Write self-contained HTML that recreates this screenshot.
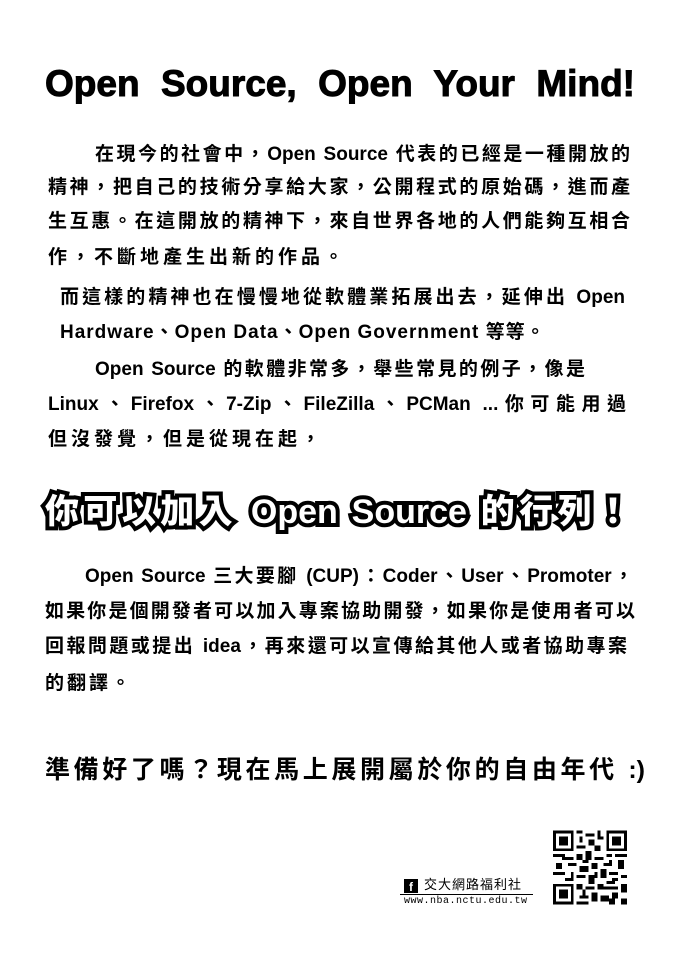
<!DOCTYPE html>
<html><head><meta charset="utf-8"><style>
body{margin:0;width:678px;height:960px;background:#fff;position:relative;overflow:hidden;font-family:"Liberation Sans","Noto Sans CJK TC",sans-serif;color:#000}
.l{position:absolute;font-size:19px;font-weight:bold;white-space:nowrap;line-height:24px}
.j{text-align:justify;text-align-last:justify}
.t{position:absolute;left:45px;width:590px;top:62px;text-align:justify;text-align-last:justify;font-size:37px;font-weight:900;font-family:"Liberation Sans",sans-serif;line-height:44px;-webkit-text-stroke:1px #000;white-space:nowrap}
.h{position:absolute;left:45px;width:585px;top:490px;font-size:34px;font-weight:900;line-height:44px;color:#fff;-webkit-text-stroke:8px #000;paint-order:stroke fill;text-align:justify;text-align-last:justify;white-space:nowrap}
</style></head><body>
<div class="t">Open Source, Open Your Mind!</div>
<div class="l j" style="left:95px;width:535px;top:143px">在現今的社會中，Open Source 代表的已經是一種開放的</div>
<div class="l j" style="left:48px;width:582px;top:176px">精神，把自己的技術分享給大家，公開程式的原始碼，進而產</div>
<div class="l j" style="left:48px;width:582px;top:210px">生互惠。在這開放的精神下，來自世界各地的人們能夠互相合</div>
<div class="l" style="left:48px;top:246px;letter-spacing:4px">作，不斷地產生出新的作品。</div>
<div class="l j" style="left:60px;width:565px;top:286px">而這樣的精神也在慢慢地從軟體業拓展出去，延伸出 Open</div>
<div class="l" style="left:60px;top:321px;letter-spacing:1px">Hardware、Open Data、Open Government 等等。</div>
<div class="l j" style="left:95px;width:490px;top:358px">Open Source 的軟體非常多，舉些常見的例子，像是</div>
<div class="l j" style="left:48px;width:578px;top:393px">Linux、Firefox、7-Zip、FileZilla、PCMan ...你可能用過</div>
<div class="l" style="left:48px;top:428px;letter-spacing:4px">但沒發覺，但是從現在起，</div>
<div class="h">你可以加入 Open Source 的行列！</div>
<div class="l j" style="left:85px;width:548px;top:565px">Open Source 三大要腳 (CUP)：Coder、User、Promoter，</div>
<div class="l j" style="left:45px;width:590px;top:600px">如果你是個開發者可以加入專案協助開發，如果你是使用者可以</div>
<div class="l j" style="left:45px;width:582px;top:635px">回報問題或提出 idea，再來還可以宣傳給其他人或者協助專案</div>
<div class="l" style="left:45px;top:672px;letter-spacing:3px">的翻譯。</div>
<div class="l j" style="left:45px;width:600px;top:755px;font-size:25px;line-height:30px">準備好了嗎？現在馬上展開屬於你的自由年代 :)</div>
<div style="position:absolute;left:404px;top:879px;width:14px;height:14px;background:#000;color:#fff;font-size:12px;font-weight:bold;text-align:center;line-height:16px">f</div>
<div style="position:absolute;left:424px;top:876px;font-size:13px;letter-spacing:1px;line-height:18px">交大網路福利社</div>
<div style="position:absolute;left:400px;top:894px;width:133px;border-top:1px solid #000"></div>
<div style="position:absolute;left:404px;top:896px;font-size:10px;font-family:'Liberation Mono',monospace;letter-spacing:0.5px">www.nba.nctu.edu.tw</div>
<svg style="position:absolute;left:553px;top:830px" width="74" height="75" viewBox="0 0 25 25" shape-rendering="crispEdges">
<rect width="25" height="25" fill="#fff"/>
<g fill="#000">
<rect x="0" y="0" width="7" height="7"/><rect x="1" y="1" width="5" height="5" fill="#fff"/><rect x="2" y="2" width="3" height="3"/>
<rect x="18" y="0" width="7" height="7"/><rect x="19" y="1" width="5" height="5" fill="#fff"/><rect x="20" y="2" width="3" height="3"/>
<rect x="0" y="18" width="7" height="7"/><rect x="1" y="19" width="5" height="5" fill="#fff"/><rect x="2" y="20" width="3" height="3"/>
<path d="M8 0h2v1h-2zM11 1h3v1h-3zM9 2h1v2h-1zM12 3h2v2h-2zM15 0h1v3h-1zM8 5h3v1h-3zM14 5h2v2h-2zM0 8h3v1h-3zM4 9h3v1h-3zM8 8h2v2h-2zM11 7h2v3h-2zM14 9h3v1h-3zM18 8h2v1h-2zM21 8h4v1h-4zM1 11h2v2h-2zM5 11h3v1h-3zM9 12h3v2h-3zM13 11h2v2h-2zM17 11h3v1h-3zM22 10h2v3h-2zM0 14h4v1h-4zM6 14h1v3h-1zM8 15h3v1h-3zM12 15h2v2h-2zM16 13h2v3h-2zM19 14h3v1h-3zM23 15h2v1h-2zM8 18h2v2h-2zM11 19h3v1h-3zM15 18h2v2h-2zM18 17h3v1h-3zM17 19h5v1h-5zM20 21h2v2h-2zM23 18h2v3h-2zM9 22h3v1h-3zM13 21h2v3h-2zM16 22h3v2h-3zM23 23h2v2h-2zM8 24h4v1h-4zM3 8h1v2h-1zM10 10h2v1h-2zM19 10h1v2h-1zM14 14h1v2h-1zM20 16h2v1h-2zM10 20h1v2h-1zM19 23h2v2h-2zM15 2h2v1h-2zM12 17h2v1h-2zM4 16h2v1h-2z"/>
</g></svg>
</body></html>
